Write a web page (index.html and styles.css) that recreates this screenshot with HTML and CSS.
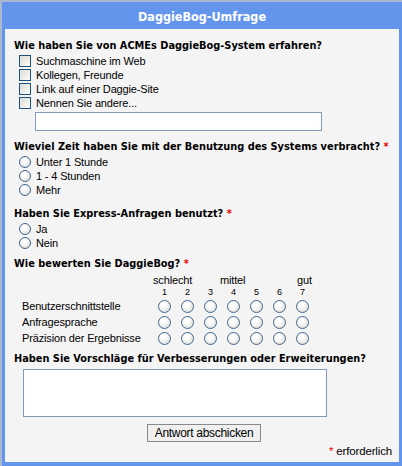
FILE: index.html
```html
<!DOCTYPE html>
<html>
<head>
<meta charset="utf-8">
<link rel="stylesheet" href="styles.css">
</head>
<body>
<div class="survey">
  <div class="title">DaggieBog-Umfrage</div>
  <div class="panel">
    <div class="q">Wie haben Sie von ACMEs DaggieBog-System erfahren?</div>
    <div class="opts">
      <div class="opt"><span class="cb"></span>Suchmaschine im Web</div>
      <div class="opt"><span class="cb"></span>Kollegen, Freunde</div>
      <div class="opt"><span class="cb"></span>Link auf einer Daggie-Site</div>
      <div class="opt"><span class="cb"></span>Nennen Sie andere...</div>
    </div>
    <div class="other"></div>

    <div class="q">Wieviel Zeit haben Sie mit der Benutzung des Systems verbracht? <span class="req">*</span></div>
    <div class="opts">
      <div class="opt"><span class="rb"></span>Unter 1 Stunde</div>
      <div class="opt"><span class="rb"></span>1 - 4 Stunden</div>
      <div class="opt"><span class="rb"></span>Mehr</div>
    </div>

    <div class="q">Haben Sie Express-Anfragen benutzt? <span class="req">*</span></div>
    <div class="opts">
      <div class="opt"><span class="rb"></span>Ja</div>
      <div class="opt"><span class="rb"></span>Nein</div>
    </div>

    <div class="q q4">Wie bewerten Sie DaggieBog? <span class="req">*</span></div>
    <div class="matrix">
      <div class="scale"><span class="s1">schlecht</span><span class="s2">mittel</span><span class="s3">gut</span></div>
      <div class="mrow nums"><span class="lbl"></span><span>1</span><span>2</span><span>3</span><span>4</span><span>5</span><span>6</span><span>7</span></div>
      <div class="mrow"><span class="lbl">Benutzerschnittstelle</span><span><i class="rr"></i></span><span><i class="rr"></i></span><span><i class="rr"></i></span><span><i class="rr"></i></span><span><i class="rr"></i></span><span><i class="rr"></i></span><span><i class="rr"></i></span></div>
      <div class="mrow"><span class="lbl">Anfragesprache</span><span><i class="rr"></i></span><span><i class="rr"></i></span><span><i class="rr"></i></span><span><i class="rr"></i></span><span><i class="rr"></i></span><span><i class="rr"></i></span><span><i class="rr"></i></span></div>
      <div class="mrow"><span class="lbl">Präzision der Ergebnisse</span><span><i class="rr"></i></span><span><i class="rr"></i></span><span><i class="rr"></i></span><span><i class="rr"></i></span><span><i class="rr"></i></span><span><i class="rr"></i></span><span><i class="rr"></i></span></div>
    </div>

    <div class="q q5">Haben Sie Vorschläge für Verbesserungen oder Erweiterungen?</div>
    <div class="ta"></div>
    <div class="btnrow"><span class="btn">Antwort abschicken</span></div>
    <div class="note"><span class="req">*</span> erforderlich</div>
  </div>
</div>
</body>
</html>
```
FILE: styles.css
```css
html, body { margin: 0; padding: 0; overflow: hidden; }
body {
  background: #a9b8cf;
  padding: 2px 0 0 2px;
  width: 402px;
  height: 466px;
  box-sizing: border-box;
  font-family: "Liberation Sans", Arial, sans-serif;
  font-size: 11px;
  letter-spacing: -0.15px;
  color: #000;
}
.survey {
  background: #6495ed;
  width: 400px;
  padding: 0 3px 4px 3px;
  box-sizing: border-box;
}
.title {
  height: 27px;
  line-height: 27px;
  text-align: center;
  color: #fff;
  font-family: "DejaVu Sans Condensed", "DejaVu Sans", Verdana, sans-serif;
  font-stretch: condensed;
  font-weight: bold;
  font-size: 12.5px;
  letter-spacing: 0;
  padding-top: 1px;
  box-sizing: border-box;
}
.panel {
  background: #f4f4f4;
  height: 433px;
  padding: 10px 9px 0 9px;
  box-sizing: border-box;
}
.q {
  font-family: "DejaVu Sans Condensed", "DejaVu Sans", Verdana, sans-serif;
  font-stretch: condensed;
  font-weight: bold;
  font-size: 10.9px;
  letter-spacing: 0;
  line-height: 14px;
  height: 14px;
  white-space: nowrap;
}
.req { color: #e00; }
.opts { padding-left: 5px; margin-top: 1px; }
.opt {
  height: 14px;
  line-height: 14px;
  display: flex;
  align-items: center;
}
.cb {
  width: 10px; height: 10px;
  border: 1px solid #1c5180;
  background: linear-gradient(135deg, #dcdcd5, #fbfbf9);
  margin-right: 5px;
  flex: none;
}
.rb, .rr {
  width: 10px; height: 10px;
  border: 1px solid #41668f;
  border-radius: 50%;
  background: radial-gradient(circle at 40% 35%, #fff 20%, #d6d6d0 100%);
  margin-right: 5px;
  flex: none;
  display: inline-block;
}
.other {
  width: 287px; height: 19px;
  margin: 2px 0 9px 21px;
  background: #fff;
  border: 1px solid #7f9db9;
  box-sizing: border-box;
}
.opts + .q { margin-top: 10px; }
.opts + .q.q4 { margin-top: 7px; }
.matrix { margin-top: 2px; }
.scale {
  display: flex;
  height: 14px; line-height: 14px;
  padding-left: 139px;
}
.s1 { width: 67px; }
.s2 { width: 77px; }
.mrow { display: flex; align-items: center; height: 16px; padding-left: 8px; }
.mrow.nums { font-size: 9px; height: 11px; line-height: 11px; letter-spacing: 0; }
.lbl { width: 131px; }
.mrow > span:not(.lbl) { width: 23px; text-align: center; display: flex; justify-content: center; }
.rr { width: 11px; height: 11px; margin: 0; }
.q5 { margin-top: 6px; }
.ta {
  width: 304px; height: 48px;
  margin: 3px 0 0 9px;
  background: #fff;
  border: 1px solid #7f9db9;
  box-sizing: border-box;
}
.btnrow { display: flex; justify-content: center; margin-top: 7px; padding-left: 4px; }
.btn {
  width: 114px; height: 18px;
  border: 1px solid #888;
  box-sizing: border-box;
  background: #f0f0f0;
  text-align: center;
  line-height: 16px;
  font-size: 12px;
  letter-spacing: -0.3px;
}
.note { text-align: right; margin-top: 3px; margin-right: -2px; font-size: 11.5px; }
```
